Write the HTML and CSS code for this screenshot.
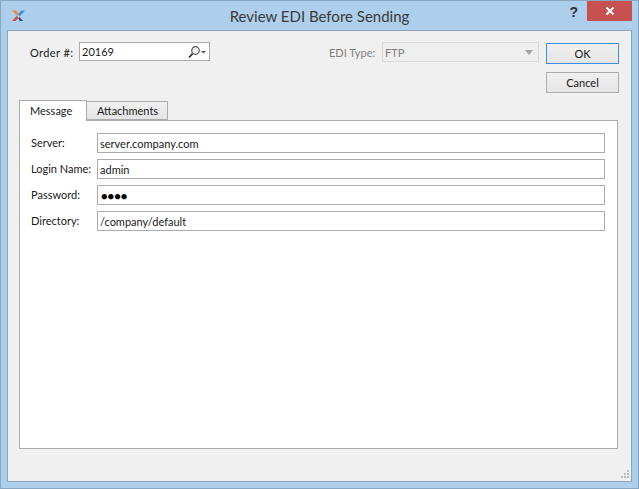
FILE: index.html
```html
<!DOCTYPE html>
<html lang="en">
<head>
  <meta charset="UTF-8" />
  <title>Review EDI Before Sending</title>
  <link rel="stylesheet" href="styles.css">
</head>
<body>
  <div class="window">
    <div class="titlebar">
      <svg class="app-icon" width="13" height="11" viewBox="1 1 14 12">
        <path d="M1 1.5h4.5l3 4-1.8 2z" fill="#ee8a3c"/>
        <path d="M15 1.5h-4.2L7.6 6l1.8 1.8z" fill="#2f8fe0"/>
        <path d="M6.2 7.6L1 13h3.6l3.4-3.6z" fill="#e0432c"/>
        <path d="M9 8.6L13 13h-3.4L7.8 10.4z" fill="#24479c"/>
      </svg>
      <div class="title">Review EDI Before Sending</div>
      <div class="help">?</div>
      <div class="close">
        <svg width="10" height="10" viewBox="0 0 10 10"><path d="M1.5 1.5l7 7M8.5 1.5l-7 7" stroke="#fff" stroke-width="2"/></svg>
      </div>
    </div>

    <div class="client">
      <div class="top">
        <label class="order-label">Order #:</label>
        <div class="order-box">
          <span class="order-value">20169</span>
          <svg width="18" height="14" viewBox="0 0 18 14">
            <circle cx="7.5" cy="5.5" r="3.8" fill="#f2f2f2" stroke="#555" stroke-width="1.2"/>
            <path d="M4.6 8.6L1 12.5" stroke="#333" stroke-width="1.8"/>
            <path d="M13 6h5l-2.5 2.5z" fill="#555"/>
          </svg>
        </div>
        <label class="edi-label">EDI Type:</label>
        <div class="edi-box">
          <span>FTP</span>
          <span class="edi-arrow"></span>
        </div>
        <div class="buttons">
          <button class="btn btn-default">OK</button>
          <button class="btn">Cancel</button>
        </div>
      </div>

      <div class="tabs">
        <div class="tab tab-active">Message</div>
        <div class="tab">Attachments</div>
      </div>
      <div class="pane">
        <div class="row"><label>Server:</label><div class="field">server.company.com</div></div>
        <div class="row"><label>Login Name:</label><div class="field">admin</div></div>
        <div class="row"><label>Password:</label><div class="field field-pass">●●●●</div></div>
        <div class="row"><label>Directory:</label><div class="field">/company/default</div></div>
      </div>
      <svg class="grip" width="10" height="10" viewBox="0 0 10 10" fill="#bdbdbd">
        <rect x="7" y="0" width="2" height="2"/>
        <rect x="4" y="3" width="2" height="2"/><rect x="7" y="3" width="2" height="2"/>
        <rect x="1" y="6" width="2" height="2"/><rect x="4" y="6" width="2" height="2"/><rect x="7" y="6" width="2" height="2"/>
      </svg>
    </div>
  </div>
</body>
</html>
```

FILE: styles.css
```css
html, body { margin: 0; padding: 0; }
body { font-family: Lato, "Open Sans", sans-serif; font-size: 11px; color: #1a1a1a; }
label { display: block; }

.window { box-sizing: border-box; width: 639px; height: 489px; background: #aecfeb; border: 1px solid #8aa6c1; padding: 0 6px 6px 6px; display: flex; flex-direction: column; }

.titlebar { height: 29px; flex: none; display: flex; position: relative; }
.app-icon { margin: 9px 0 0 5px; }
.title { position: absolute; left: 0; right: 0; top: 5px; text-align: center; font-size: 15px; line-height: 20px; color: #3a3a3a; }
.help { position: absolute; right: 54px; top: 1px; font-size: 14px; line-height: 20px; font-weight: bold; font-family: "Liberation Sans", sans-serif; color: #2a2f36; }
.close { position: absolute; right: 0; top: 0; width: 45px; height: 20px; background: #c75050; display: flex; align-items: center; justify-content: center; }

.client { flex: 1; position: relative; background: #f0f0f0; border: 1px solid #8aa6c1; padding: 0 12px 0 11px; display: flex; flex-direction: column; }

.top { height: 69px; flex: none; display: flex; align-items: flex-start; }
.order-label { margin: 14px 0 0 11px; width: 49px; line-height: 15px; letter-spacing: 0.4px; }
.order-box { box-sizing: border-box; width: 131px; height: 19px; margin-top: 11px; background: #fff; border: 1px solid #ababab; display: flex; align-items: center; justify-content: space-between; padding: 0 3px 0 2px; }
.edi-label { margin: 14px 0 0 119px; width: 53px; line-height: 15px; color: #808080; }
.edi-box { box-sizing: border-box; width: 157px; height: 20px; margin-top: 11px; background: #efefef; border: 1px solid #d9d9d9; color: #808080; display: flex; align-items: center; justify-content: space-between; padding: 0 5px 0 2px; }
.edi-arrow { width: 0; height: 0; border: 4px solid transparent; border-top: 5px solid #a6a6a6; border-bottom: 0; }
.buttons { margin: 12px 0 0 7px; display: flex; flex-direction: column; gap: 8px; }
.btn { box-sizing: border-box; width: 73px; height: 21px; padding: 0; font: inherit; color: #1a1a1a; background: linear-gradient(#f0f0f0, #e5e5e5); border: 1px solid #acacac; }
.btn-default { border-color: #3c8fe6; }

.tabs { display: flex; height: 21px; flex: none; position: relative; z-index: 1; align-items: flex-end; }
.tab { box-sizing: border-box; width: 81px; height: 19px; line-height: 18px; padding: 0 0 0 10px; margin-bottom: 1px; background: linear-gradient(#f0f0f0, #e5e5e5); border: 1px solid #acacac; border-left: 0; }
.tab-active { width: 68px; height: 21px; line-height: 19px; margin-bottom: 0; padding: 0 0 0 10px; background: #fff; border: 1px solid #acacac; border-bottom: 0; }

.pane { box-sizing: border-box; height: 329px; width: 599px; margin-top: -1px; background: #fff; border: 1px solid #acacac; padding: 12px 12px 0 11px; display: flex; flex-direction: column; gap: 6px; }
.row { display: flex; align-items: center; height: 20px; }
.row label { width: 66px; flex: none; margin-top: -2px; }
.field { box-sizing: border-box; flex: 1; height: 20px; line-height: 19px; border: 1px solid #ababab; padding: 0 2px; background: #fff; }
.field-pass { color: #000; padding-left: 3px; }

.grip { position: absolute; right: 1px; bottom: 1px; }
```
